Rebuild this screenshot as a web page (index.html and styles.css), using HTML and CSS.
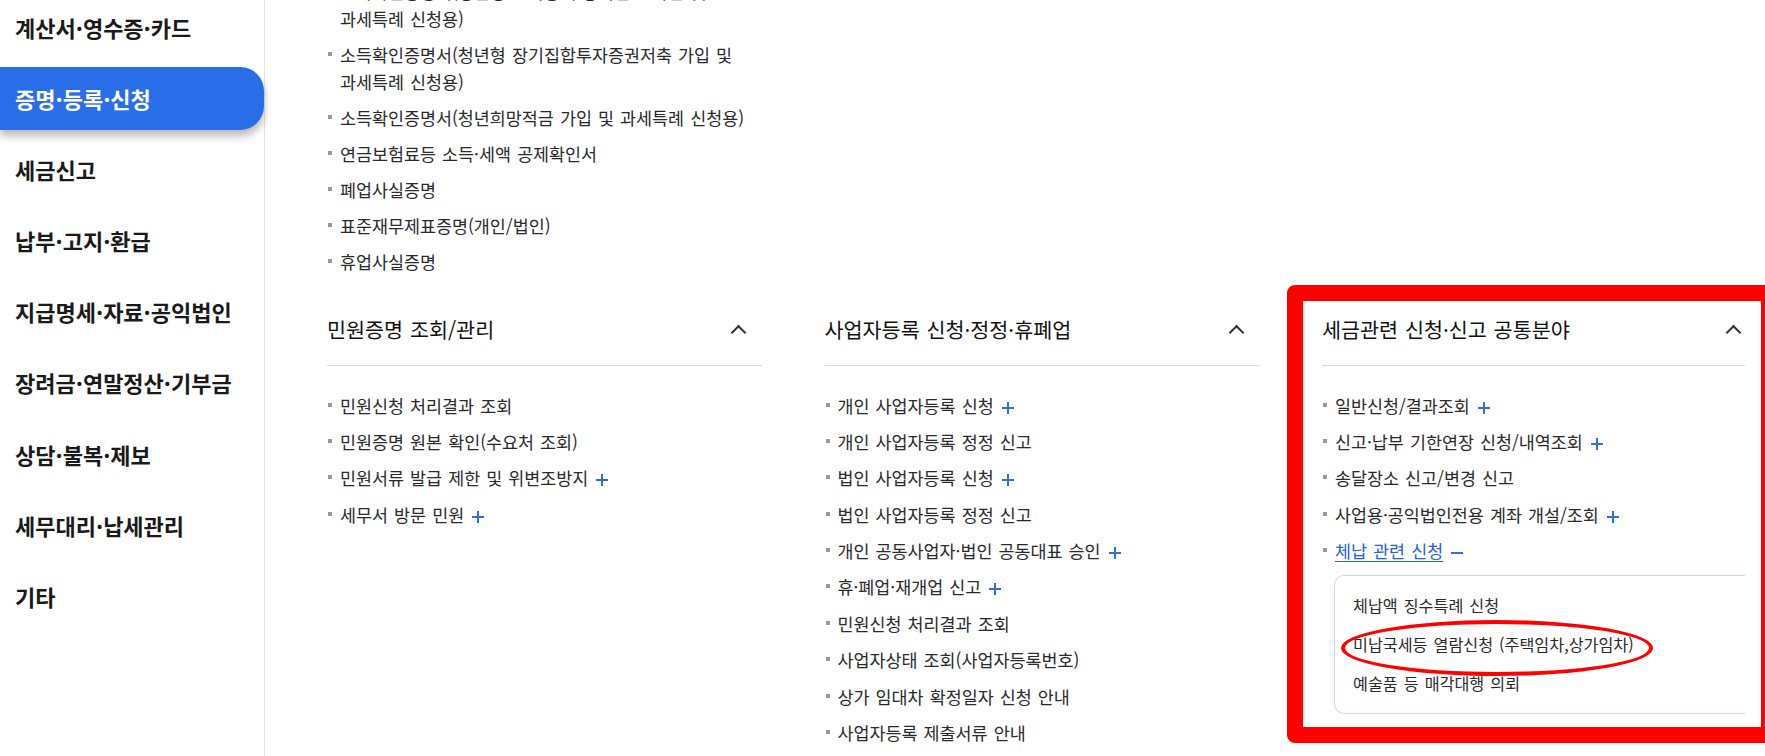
FILE: index.html
```html
<!DOCTYPE html>
<html lang="ko">
<head>
  <meta charset="UTF-8" />
  <meta name="viewport" content="width=device-width, initial-scale=1" />
  <title>증명·등록·신청</title>
  <link rel="stylesheet" href="styles.css">
</head>
<body>
  <div class="page">
    <nav class="sidebar">
      <ul class="menu">
        <li class="menu-item">계산서·영수증·카드</li>
        <li class="menu-item active">증명·등록·신청</li>
        <li class="menu-item">세금신고</li>
        <li class="menu-item">납부·고지·환급</li>
        <li class="menu-item">지급명세·자료·공익법인</li>
        <li class="menu-item">장려금·연말정산·기부금</li>
        <li class="menu-item">상담·불복·제보</li>
        <li class="menu-item">세무대리·납세관리</li>
        <li class="menu-item">기타</li>
      </ul>
    </nav>

    <main class="content">
      <!-- 위 그룹의 남은 항목 -->
      <ul class="links tail">
        <li>소득확인증명서(청년형 소득공제 장기펀드 가입 및<br>과세특례 신청용)</li>
        <li>소득확인증명서(청년형 장기집합투자증권저축 가입 및<br>과세특례 신청용)</li>
        <li>소득확인증명서(청년희망적금 가입 및 과세특례 신청용)</li>
        <li>연금보험료등 소득·세액 공제확인서</li>
        <li>폐업사실증명</li>
        <li>표준재무제표증명(개인/법인)</li>
        <li>휴업사실증명</li>
      </ul>

      <div class="groups">
        <section class="group">
          <div class="group-head">
            <h2>민원증명 조회/관리</h2>
            <span class="chevron"></span>
          </div>
          <ul class="links">
            <li>민원신청 처리결과 조회</li>
            <li>민원증명 원본 확인(수요처 조회)</li>
            <li>민원서류 발급 제한 및 위변조방지 <span class="plus"></span></li>
            <li>세무서 방문 민원 <span class="plus"></span></li>
          </ul>
        </section>

        <section class="group">
          <div class="group-head">
            <h2>사업자등록 신청·정정·휴폐업</h2>
            <span class="chevron"></span>
          </div>
          <ul class="links">
            <li>개인 사업자등록 신청 <span class="plus"></span></li>
            <li>개인 사업자등록 정정 신고</li>
            <li>법인 사업자등록 신청 <span class="plus"></span></li>
            <li>법인 사업자등록 정정 신고</li>
            <li>개인 공동사업자·법인 공동대표 승인 <span class="plus"></span></li>
            <li>휴·폐업·재개업 신고 <span class="plus"></span></li>
            <li>민원신청 처리결과 조회</li>
            <li>사업자상태 조회(사업자등록번호)</li>
            <li>상가 임대차 확정일자 신청 안내</li>
            <li>사업자등록 제출서류 안내</li>
          </ul>
        </section>

        <section class="group">
          <div class="group-head">
            <h2>세금관련 신청·신고 공통분야</h2>
            <span class="chevron"></span>
          </div>
          <ul class="links">
            <li>일반신청/결과조회 <span class="plus"></span></li>
            <li>신고·납부 기한연장 신청/내역조회 <span class="plus"></span></li>
            <li>송달장소 신고/변경 신고</li>
            <li>사업용·공익법인전용 계좌 개설/조회 <span class="plus"></span></li>
            <li class="open">
              <a href="#">체납 관련 신청</a> <span class="minus"></span>
              <ul class="sub">
                <li>체납액 징수특례 신청</li>
                <li class="marked">미납국세등 열람신청 (주택임차,상가임차)</li>
                <li>예술품 등 매각대행 의뢰</li>
              </ul>
            </li>
          </ul>
        </section>
      </div>
    </main>
  </div>

  <div class="highlight-box"></div>
</body>
</html>
```

FILE: styles.css
```css
* {
  box-sizing: border-box;
}

body {
  margin: 0;
  width: 1765px;
  height: 756px;
  overflow: hidden;
  position: relative;
  font-family: "Noto Sans CJK KR", "Noto Sans", sans-serif;
  color: #222;
  background: #fff;
}

ul {
  list-style: none;
  margin: 0;
  padding: 0;
}

.page {
  display: flex;
  height: 756px;
}

/* 왼쪽 메뉴 */
.sidebar {
  width: 265px;
  flex-shrink: 0;
  border-right: 1px solid #e2e2f6;
}

.menu {
  margin-top: -4px;
  display: flex;
  flex-direction: column;
  gap: 8.1px;
}

.menu-item {
  height: 63px;
  line-height: 63px;
  padding-left: 15px;
  font-size: 22px;
  font-weight: 700;
  color: #1a1a1a;
}

.menu-item.active {
  background: #2a6de8;
  color: #fff;
  border-radius: 0 24px 24px 0;
  box-shadow: 0 6px 8px rgba(0, 0, 0, 0.28);
}

/* 본문 */
.content {
  width: 1480px;
  overflow: hidden;
  padding-left: 62px;
}

.links {
  display: flex;
  flex-direction: column;
  gap: 9.4px;
}

.links > li {
  position: relative;
  padding-left: 13px;
  font-size: 17.4px;
  line-height: 27px;
  word-spacing: 1.2px;
  color: #2a2a2a;
}

.links > li::before {
  content: "";
  position: absolute;
  left: 1px;
  top: 11px;
  width: 4px;
  height: 4px;
  background: #999;
}

.tail {
  width: 435px;
  gap: 9px;
  margin-top: -22.5px;
}

.groups {
  display: grid;
  grid-template-columns: repeat(3, 435px);
  column-gap: 62.5px;
  margin-top: 27px;
}

.group-head {
  display: flex;
  justify-content: space-between;
  align-items: center;
  padding: 13px 0 22px;
  border-bottom: 1px solid #dcdcdc;
  margin-bottom: 26px;
}

.group-head h2 {
  margin: 0;
  font-size: 20.7px;
  font-weight: 400;
  line-height: 28px;
  word-spacing: 1px;
  color: #111;
}

.chevron {
  width: 11px;
  height: 11px;
  margin-right: 18px;
  margin-top: 7px;
  border-top: 2px solid #333;
  border-left: 2px solid #333;
  transform: rotate(45deg);
}

.plus,
.minus {
  display: inline-block;
  position: relative;
  width: 12px;
  height: 12px;
  margin-left: 2px;
  vertical-align: -1px;
}

.plus::before,
.plus::after,
.minus::before {
  content: "";
  position: absolute;
  background: #2f6fe3;
}

.plus::before,
.minus::before {
  left: 0;
  top: 5px;
  width: 12px;
  height: 2px;
}

.plus::after {
  left: 5px;
  top: 0;
  width: 2px;
  height: 12px;
}

.open a {
  color: #2563d8;
  text-decoration: underline;
  text-underline-offset: 3px;
}

.sub {
  margin: 11px 0 0 -1px;
  padding: 16px 0 16px 18px;
  border: 1px solid #c7d7f1;
  border-radius: 10px;
  display: flex;
  flex-direction: column;
  gap: 12px;
}

.sub li {
  position: relative;
  font-size: 16.2px;
  line-height: 27px;
  word-spacing: 1.5px;
  color: #2a2a2a;
}

/* 주석 표시 */
.marked::after {
  content: "";
  position: absolute;
  left: -12px;
  top: -11px;
  width: 304px;
  height: 48px;
  border: 4px solid #f00;
  border-radius: 50%;
}

.highlight-box {
  position: absolute;
  left: 1287px;
  top: 285px;
  width: 490px;
  height: 458px;
  border: 16px solid #f00;
  border-radius: 8px;
}
```
